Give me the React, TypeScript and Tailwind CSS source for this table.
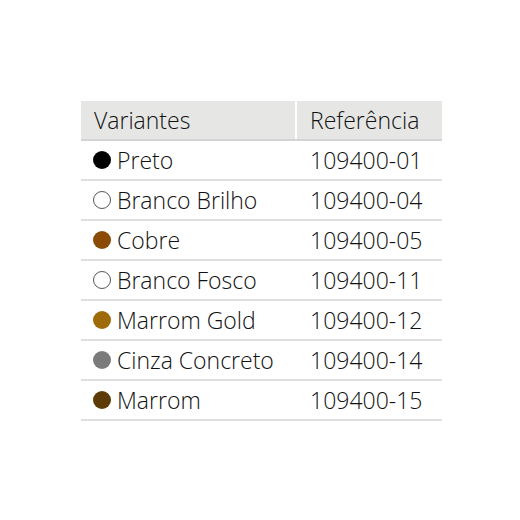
const ROWS = [
  { name: "Preto", ref: "109400-01", color: "bg-[#000000]", outline: false },
  { name: "Branco Brilho", ref: "109400-04", color: "bg-white", outline: true },
  { name: "Cobre", ref: "109400-05", color: "bg-[#8b4a06]", outline: false },
  { name: "Branco Fosco", ref: "109400-11", color: "bg-white", outline: true },
  { name: "Marrom Gold", ref: "109400-12", color: "bg-[#9e6a0a]", outline: false },
  { name: "Cinza Concreto", ref: "109400-14", color: "bg-[#7b7b7b]", outline: false },
  { name: "Marrom", ref: "109400-15", color: "bg-[#5c3b06]", outline: false },
];

export default function App() {
  return (
    <div className="w-[520px] h-[520px] bg-white pt-[101px] pl-[81px] font-['Open_Sans','Lato',sans-serif] font-light text-[#111111] text-[23px] leading-none">
      <div className="w-[361px]">
        <div className="flex h-[40px] border-b-2 border-[#d4d4d4]">
          <div className="w-[214px] bg-[#e6e7e5] flex items-center pl-[13px]">Variantes</div>
          <div className="w-[2px] bg-white" />
          <div className="flex-1 bg-[#e6e7e5] flex items-center pl-[13px]">Referência</div>
        </div>
        {ROWS.map((r) => (
          <div key={r.ref} className="flex h-[40px] border-b-2 border-[#e0e0e0]">
            <div className="w-[216px] flex items-center pl-[12px] gap-[6px]">
              <span
                className={`w-[18px] h-[18px] rounded-full shrink-0 ${r.color} ${r.outline ? "border border-[#555]" : ""}`}
              />
              <span>{r.name}</span>
            </div>
            <div className="flex-1 flex items-center pl-[13px]">{r.ref}</div>
          </div>
        ))}
      </div>
    </div>
  );
}
